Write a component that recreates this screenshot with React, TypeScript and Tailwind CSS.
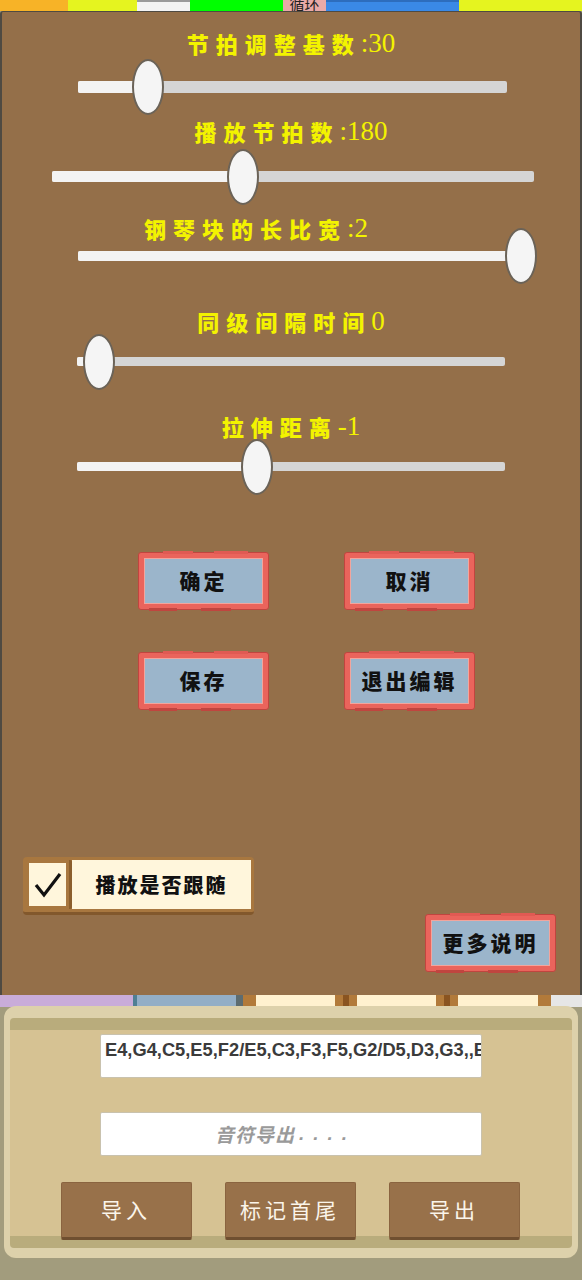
import React from 'react'

const cjk = { fontFamily: '"Noto Sans CJK SC", "Noto Sans", sans-serif' }
const serif = { fontFamily: '"Liberation Serif", "DejaVu Serif", serif' }
const sans = { fontFamily: '"Liberation Sans", Arial, "Noto Sans CJK SC", sans-serif' }

type SliderDef = {
  label: string
  value: string
  labelClass: string
  trackClass: string
  thumb: number
  gapTop: string
}

const sliders: SliderDef[] = [
  { label: '节拍调整基数', value: ':30', labelClass: 'mt-[19px]', trackClass: 'ml-[76px] w-[429px] h-[12px]', thumb: 70, gapTop: 'mt-[26px]' },
  { label: '播放节拍数', value: ':180', labelClass: 'mt-[26px]', trackClass: 'ml-[50px] w-[482px] h-[11px]', thumb: 191, gapTop: 'mt-[28px]' },
  { label: '钢琴块的长比宽', value: ':2', labelClass: 'mt-[34px] pr-[70px]', trackClass: 'ml-[76px] w-[428px] h-[10px]', thumb: 443, gapTop: 'mt-[11px]' },
  { label: '同级间隔时间', value: '0', labelClass: 'mt-[48px]', trackClass: 'ml-[75px] w-[428px] h-[9px]', thumb: 22, gapTop: 'mt-[24px]' },
  { label: '拉伸距离', value: '-1', labelClass: 'mt-[48px]', trackClass: 'ml-[75px] w-[428px] h-[9px]', thumb: 180, gapTop: 'mt-[24px]' },
]

function Slider({ s }: { s: SliderDef }) {
  return (
    <>
      <div className={`flex h-[24px] items-center justify-center ${s.labelClass}`}>
        <span style={cjk} className="text-[22px] font-black tracking-[7px] text-[#f3f300]">
          {s.label}
        </span>
        <span style={serif} className="text-[27px] leading-none text-[#f3f300]">
          {s.value}
        </span>
      </div>
      <div className={`relative rounded-[2px] bg-[#d5d5d5] ${s.trackClass} ${s.gapTop}`}>
        <div className="h-full rounded-l-[2px] bg-[#f3f3f3]" style={{ width: s.thumb }} />
        {/* thumb */}
        <div
          className="absolute top-1/2 h-[56px] w-[32px] -translate-x-1/2 -translate-y-1/2 rounded-[50%] border-2 border-[#6b6358] bg-[#f5f5f5]"
          style={{ left: s.thumb }}
        />
      </div>
    </>
  )
}

function RedButton({ label, className = '' }: { label: string; className?: string }) {
  return (
    <div className={`relative h-[58px] w-[131px] rounded-[3px] border border-[#c0453f] bg-[#ea645c] p-[5px] ${className}`}>
      {/* notched edges */}
      <div className="absolute -top-[2px] left-[24px] h-[3px] w-[30px] bg-[#e05a53]" />
      <div className="absolute -top-[2px] right-[20px] h-[3px] w-[34px] bg-[#e05a53]" />
      <div className="absolute -bottom-[2px] left-[10px] h-[3px] w-[28px] bg-[#c0453f]" />
      <div className="absolute -bottom-[2px] left-[62px] h-[3px] w-[30px] bg-[#c0453f]" />
      <div className="flex h-full items-center justify-center border border-[#f2a59d] bg-[#9bb5cb]">
        <span style={cjk} className="text-[21px] font-black tracking-[3px] text-[#111]">
          {label}
        </span>
      </div>
    </div>
  )
}

function BrownButton({ label }: { label: string }) {
  return (
    <div className="flex h-[58px] w-[131px] items-center justify-center rounded-[2px] border border-[#8a6440] border-b-[3px] border-b-[#6f4f30] bg-[#98714a]">
      <span style={cjk} className="text-[21px] tracking-[4px] text-[#fbf5ea]">
        {label}
      </span>
    </div>
  )
}

export default function App() {
  return (
    <div className="flex h-[1280px] w-[582px] flex-col overflow-hidden bg-[#a29c7d]">
      {/* top tab strip */}
      <div className="flex h-[11px] shrink-0">
        <div className="w-[68px] bg-[#f7b327]" />
        <div className="w-[69px] bg-[#e5f41f]" />
        <div className="w-[53px] border-t-2 border-[#9a9a9a] bg-[#f3f3f3]" />
        <div className="w-[93px] bg-[#00ff00]" />
        <div className="flex w-[43px] justify-center overflow-hidden bg-[#e9aaa8]">
          <span style={cjk} className="-mt-[4px] text-[15px] leading-none text-[#222]">循环</span>
        </div>
        <div className="w-[133px] border-t-2 border-[#2d6dbd] bg-[#3a89e6]" />
        <div className="flex-1 bg-[#e5f41f]" />
      </div>

      {/* settings panel */}
      <div className="flex h-[984px] shrink-0 flex-col rounded-t-[3px] border-x-[2px] border-t border-[#4f4a42] bg-[#946f49]">
        {sliders.map((s) => (
          <Slider key={s.label} s={s} />
        ))}

        <div className="mt-[81px] ml-[136px] flex gap-[75px]">
          <RedButton label="确定" />
          <RedButton label="取消" />
        </div>
        <div className="mt-[42px] ml-[136px] flex gap-[75px]">
          <RedButton label="保存" />
          <RedButton label="退出编辑" />
        </div>

        {/* follow-playback toggle */}
        <div className="mt-[147px] ml-[21px] flex h-[58px] w-[231px] rounded-[4px] border-b-[3px] border-[#82582c] bg-[#a8773f] p-[3px]">
          <div className="flex w-[46px] items-center justify-center rounded-[2px] border-r-[3px] border-[#8b5e2c] bg-[#a8773f] p-[3px]">
            <div className="flex h-full w-full items-center justify-center bg-[#fff6dc]">
              <svg width="30" height="28" viewBox="0 0 30 28">
                <path d="M3 14 L11 24 L27 3" fill="none" stroke="#111" strokeWidth="3.2" strokeLinejoin="miter" />
              </svg>
            </div>
          </div>
          <div className="flex flex-1 items-center justify-center bg-[#fff6dc]">
            <span style={cjk} className="text-[20px] font-black tracking-[2px] text-[#111]">
              播放是否跟随
            </span>
          </div>
        </div>

        <RedButton label="更多说明" className="mt-[-1px] mr-[24px] self-end" />
      </div>

      {/* item strip under panel */}
      <div className="flex h-[12px] shrink-0">
        <div className="w-[133px] bg-[#c9acd9]" />
        <div className="w-[4px] bg-[#4f7f94]" />
        <div className="w-[99px] bg-[#93aec6]" />
        <div className="w-[7px] bg-[#5d6c70]" />
        <div className="w-[13px] bg-[#b27a3a]" />
        <div className="w-[79px] bg-[#fff1cf]" />
        <div className="w-[8px] bg-[#b27a3a]" />
        <div className="w-[6px] bg-[#8a5420]" />
        <div className="w-[8px] bg-[#b27a3a]" />
        <div className="w-[79px] bg-[#fff1cf]" />
        <div className="w-[8px] bg-[#b27a3a]" />
        <div className="w-[6px] bg-[#8a5420]" />
        <div className="w-[8px] bg-[#b27a3a]" />
        <div className="w-[80px] bg-[#fff1cf]" />
        <div className="w-[13px] bg-[#b27a3a]" />
        <div className="flex-1 bg-[#e6e6e6]" />
      </div>

      {/* note import / export panel */}
      <div className="mx-[4px] -mt-[1px] rounded-[12px] bg-[#ddd1ab] px-[6px] pt-[12px] pb-[10px]">
        <div className="rounded-[4px] bg-[#b9ac7c] pt-[12px] pb-[12px]">
          <div className="flex flex-col items-center bg-[#d6c293] pt-[4px]">
            <div className="h-[44px] w-[382px] overflow-hidden whitespace-nowrap rounded-[2px] border border-[#c9c2ae] bg-white px-[4px] pt-[1px]">
              <span style={sans} className="text-[18.3px] font-bold text-[#3b3b3b]">
                E4,G4,C5,E5,F2/E5,C3,F3,F5,G2/D5,D3,G3,,E5,D5
              </span>
            </div>
            <div className="mt-[34px] flex h-[44px] w-[382px] items-center rounded-[2px] border border-[#c9c2ae] bg-white pl-[114px]">
              <span style={cjk} className="text-[19px] font-bold italic tracking-[1px] text-[#9a9a9a]">
                音符导出
              </span>
              <span style={sans} className="ml-[4px] text-[19px] font-bold italic tracking-[9px] text-[#9a9a9a]">
                ....
              </span>
            </div>
            <div className="mt-[26px] -mb-[4px] flex gap-[33px] pr-[2px]">
              <BrownButton label="导入" />
              <BrownButton label="标记首尾" />
              <BrownButton label="导出" />
            </div>
          </div>
        </div>
      </div>
    </div>
  )
}
